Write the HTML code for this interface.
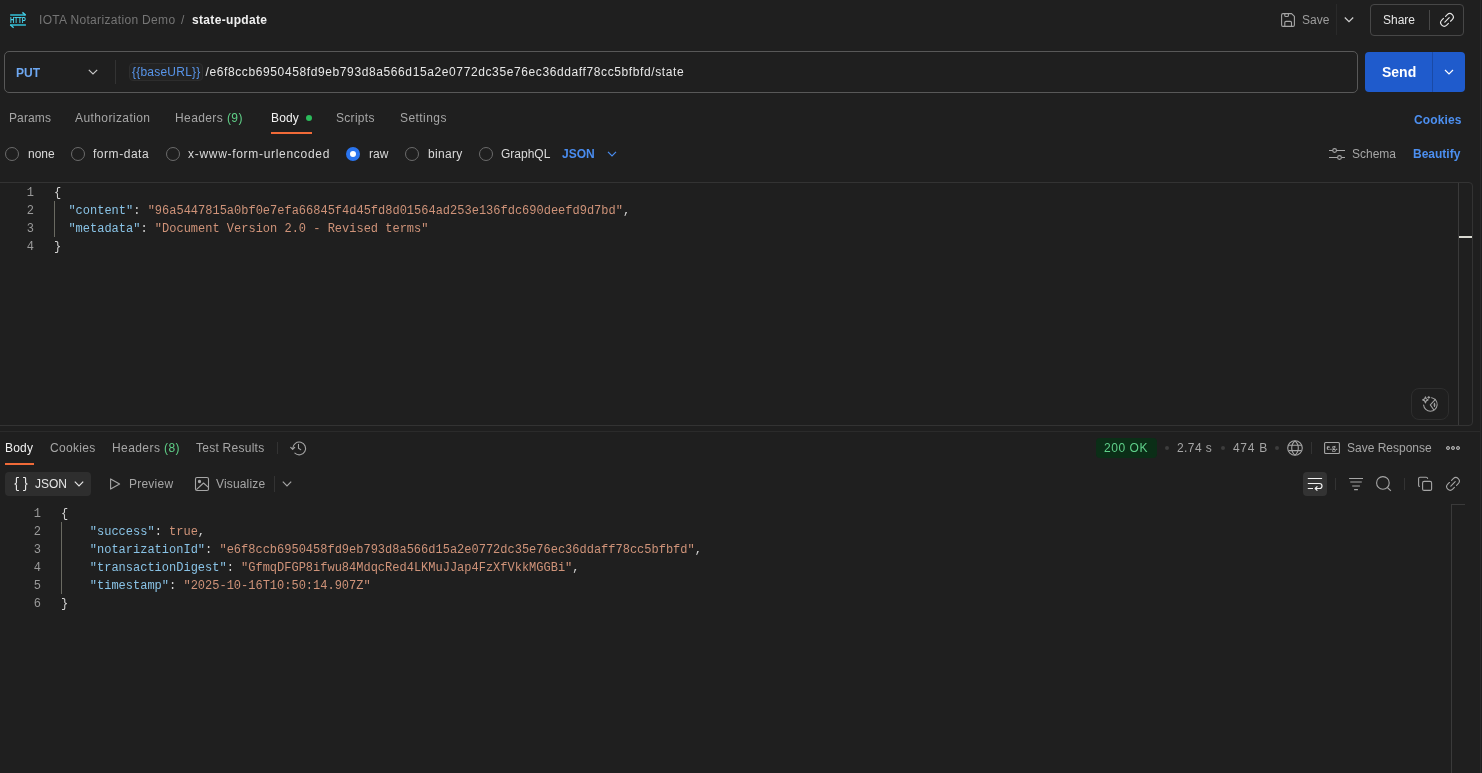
<!DOCTYPE html>
<html><head><meta charset="utf-8">
<style>
*{margin:0;padding:0;box-sizing:border-box}
html,body{width:1482px;height:773px;overflow:hidden;background:#1f1f1f}
body{will-change:transform;position:relative;font-family:"Liberation Sans",sans-serif;font-size:12px;color:#a6a6a6}
.a{position:absolute;white-space:pre;line-height:14px}
svg{position:absolute;overflow:visible}
.mono{font-family:"Liberation Mono",monospace;font-size:12px;line-height:18px}
.ln{position:absolute;text-align:right;color:#9a9a9a}
.k{color:#89c3e6}.s{color:#cf9379}.p{color:#d4d4d4}
</style></head><body>
<!-- edge strip -->
<div style="position:absolute;left:1480px;top:0;width:1px;height:773px;background:#2a2a2a"></div>

<!-- ===== top bar ===== -->
<svg style="left:0;top:0" width="40" height="40" viewBox="0 0 40 40">
<path d="M10.2 15 H25.6" stroke="#2f9fb2" stroke-width="1.9"/>
<path d="M22.4 12.4 L25.6 15.1" stroke="#45cde4" stroke-width="1.4"/>
<path d="M10.2 25 H25.9" stroke="#2f9fb2" stroke-width="1.9"/>
<path d="M13.6 27.7 L10.3 24.8" stroke="#45cde4" stroke-width="1.4"/>
<text x="9.9" y="23" font-family="Liberation Sans" font-weight="bold" font-size="8.2" fill="#48d2ea" textLength="16" lengthAdjust="spacingAndGlyphs">HTTP</text>
</svg>
<div class="a" id="bc1" style="left:39px;top:13px;color:#757575;letter-spacing:0.33px">IOTA Notarization Demo</div>
<div class="a" id="bc2" style="left:181px;top:13px;color:#757575">/</div>
<div class="a" id="bc3" style="left:192px;top:13px;color:#f0f0f0;font-weight:bold;letter-spacing:0.33px">state-update</div>

<div class="a" id="save" style="left:1302px;top:13px;color:#9c9c9c">Save</div>
<div style="position:absolute;left:1336px;top:4px;width:1px;height:31px;background:#2a2a2a"></div>
<div style="position:absolute;left:1370px;top:4px;width:94px;height:32px;border:1px solid #474747;border-radius:4px"></div>
<div class="a" id="share" style="left:1383px;top:13px;color:#e6e6e6">Share</div>
<div style="position:absolute;left:1429px;top:10px;width:1px;height:20px;background:#474747"></div>

<!-- ===== URL bar ===== -->
<div style="position:absolute;left:4px;top:51px;width:1354px;height:42px;border:1px solid #585858;border-radius:5px"></div>
<div class="a" id="put" style="left:16px;top:66px;color:#6ea8f2;font-weight:bold;font-size:12px">PUT</div>
<div style="position:absolute;left:115px;top:60px;width:1px;height:24px;background:#333"></div>
<div style="position:absolute;left:129px;top:63px;width:74px;height:18px;background:#232323;border:1px solid #2d2d2d;border-radius:4px"></div>
<div class="a" id="base" style="left:132px;top:64.5px;color:#5895ea;font-size:12px;letter-spacing:0.22px">{{baseURL}}</div>
<div class="a" id="url" style="left:205.5px;top:64.5px;color:#e8e8e8;font-size:12px;letter-spacing:0.61px">/e6f8ccb6950458fd9eb793d8a566d15a2e0772dc35e76ec36ddaff78cc5bfbfd/state</div>

<div style="position:absolute;left:1365px;top:52px;width:100px;height:40px;background:#1f5bcc;border-radius:4px"></div>
<div style="position:absolute;left:1432px;top:52px;width:1px;height:40px;background:#1a4aa6"></div>
<div class="a" id="send" style="left:1382px;top:65px;color:#fff;font-weight:bold;font-size:14px">Send</div>

<!-- ===== request tabs ===== -->
<div class="a" id="t1" style="left:9px;top:111px;letter-spacing:0.12px">Params</div>
<div class="a" id="t2" style="left:75px;top:111px;letter-spacing:0.41px">Authorization</div>
<div class="a" id="t3" style="left:175px;top:111px;letter-spacing:0.4px">Headers <span style="color:#5fcf87">(9)</span></div>
<div class="a" id="t4" style="left:271px;top:111px;color:#f2f2f2;letter-spacing:0.13px">Body</div>
<div style="position:absolute;left:306px;top:115px;width:6px;height:6px;border-radius:50%;background:#2bbb5b"></div>
<div style="position:absolute;left:271px;top:132px;width:41px;height:2px;background:#f06a38"></div>
<div class="a" id="t5" style="left:336px;top:111px;letter-spacing:0.3px">Scripts</div>
<div class="a" id="t6" style="left:400px;top:111px;letter-spacing:0.44px">Settings</div>
<div class="a" id="cookies" style="left:1414px;top:113px;color:#4c8ff0;font-weight:bold;letter-spacing:0.13px">Cookies</div>

<!-- ===== radio row ===== -->
<div class="a" id="r1" style="left:28px;top:147px;color:#dadada">none</div>
<div class="a" id="r2" style="left:93px;top:147px;color:#dadada;letter-spacing:0.54px">form-data</div>
<div class="a" id="r3" style="left:188px;top:147px;color:#dadada;letter-spacing:0.7px">x-www-form-urlencoded</div>
<div class="a" id="r4" style="left:369px;top:147px;color:#dadada">raw</div>
<div class="a" id="r5" style="left:428px;top:147px;color:#dadada;letter-spacing:0.32px">binary</div>
<div class="a" id="r6" style="left:501px;top:147px;color:#dadada">GraphQL</div>
<div class="a" id="json1" style="left:562px;top:147px;color:#4a8df0;font-weight:bold">JSON</div>
<div class="a" id="schema" style="left:1352px;top:147px;color:#a6a6a6">Schema</div>
<div class="a" id="beautify" style="left:1413px;top:147px;color:#4c8ff0;font-weight:bold">Beautify</div>

<!-- ===== request editor ===== -->
<div style="position:absolute;left:-6px;top:182px;width:1479px;height:244px;border:1px solid #333;border-radius:4px"></div>
<div style="position:absolute;left:1458px;top:183px;width:1px;height:242px;background:#3a3a3a"></div>
<div style="position:absolute;left:1459px;top:236px;width:13px;height:2px;background:#d8d8d0"></div>
<div class="mono ln" style="left:0;top:184px;width:34px">1<br>2<br>3<br>4</div>
<div style="position:absolute;left:54px;top:201px;width:1px;height:36px;background:#6a6a62"></div>
<div class="mono a" style="left:54px;top:184px;color:#d4d4d4">{<br>  <span class="k">"content"</span>: <span class="s">"96a5447815a0bf0e7efa66845f4d45fd8d01564ad253e136fdc690deefd9d7bd"</span>,<br>  <span class="k">"metadata"</span>: <span class="s">"Document Version 2.0 - Revised terms"</span><br>}</div>
<div style="position:absolute;left:1411px;top:388px;width:38px;height:32px;border:1px solid #2e2e2e;border-radius:8px"></div>

<!-- ===== response ===== -->
<div style="position:absolute;left:0;top:431px;width:1480px;height:1px;background:#2b2b2b"></div>
<div class="a" id="rt1" style="left:5px;top:441px;color:#f2f2f2;letter-spacing:0.2px">Body</div>
<div style="position:absolute;left:5px;top:463px;width:29px;height:2px;background:#f06a38"></div>
<div class="a" id="rt2" style="left:50px;top:441px;letter-spacing:0.3px">Cookies</div>
<div class="a" id="rt3" style="left:112px;top:441px;letter-spacing:0.42px">Headers <span style="color:#5fcf87">(8)</span></div>
<div class="a" id="rt4" style="left:196px;top:441px;letter-spacing:0.255px">Test Results</div>
<div style="position:absolute;left:277px;top:442px;width:1px;height:12px;background:#333"></div>

<div style="position:absolute;left:1096px;top:438px;width:61px;height:20px;background:#0b2e17;border-radius:4px"></div>
<div class="a" id="ok" style="left:1104px;top:441px;color:#5fd08a;letter-spacing:0.54px">200 OK</div>
<div class="a" id="time" style="left:1177px;top:441px;letter-spacing:0.42px">2.74 s</div>
<div class="a" id="size" style="left:1233px;top:441px;letter-spacing:0.7px">474 B</div>
<div class="a" id="saveresp" style="left:1347px;top:441px">Save Response</div>

<div style="position:absolute;left:5px;top:472px;width:86px;height:24px;background:#2e2e2e;border-radius:4px"></div>
<div class="a" id="json2" style="left:35px;top:477px;color:#e6e6e6">JSON</div>
<div class="a" id="preview" style="left:129px;top:477px;letter-spacing:0.23px">Preview</div>
<div class="a" id="visualize" style="left:216px;top:477px;letter-spacing:0.16px">Visualize</div>
<div style="position:absolute;left:274px;top:476px;width:1px;height:16px;background:#333"></div>
<div style="position:absolute;left:1303px;top:472px;width:24px;height:24px;background:#333;border-radius:4px"></div>

<div style="position:absolute;left:1451px;top:504px;width:1px;height:269px;background:#3a3a3a"></div>
<div style="position:absolute;left:1451px;top:504px;width:14px;height:1px;background:#3a3a3a"></div>
<div class="mono ln" style="left:0;top:505px;width:41px">1<br>2<br>3<br>4<br>5<br>6</div>
<div style="position:absolute;left:61px;top:522px;width:1px;height:72px;background:#6a6a62"></div>
<div class="mono a" style="left:61px;top:505px;color:#d4d4d4">{<br>    <span class="k">"success"</span>: <span class="s">true</span>,<br>    <span class="k">"notarizationId"</span>: <span class="s">"e6f8ccb6950458fd9eb793d8a566d15a2e0772dc35e76ec36ddaff78cc5bfbfd"</span>,<br>    <span class="k">"transactionDigest"</span>: <span class="s">"GfmqDFGP8ifwu84MdqcRed4LKMuJJap4FzXfVkkMGGBi"</span>,<br>    <span class="k">"timestamp"</span>: <span class="s">"2025-10-16T10:50:14.907Z"</span><br>}</div>

<!-- ===== icons ===== -->
<svg style="left:1276px;top:8px" width="24" height="24" viewBox="0 0 24 24" fill="none" stroke="#a6a6a6" stroke-width="1.1" stroke-linejoin="round">
<path d="M7 5.6 H15.6 L18.4 8.4 V17 Q18.4 18.4 17 18.4 H7 Q5.6 18.4 5.6 17 V7 Q5.6 5.6 7 5.6 Z"/>
<path d="M8.8 5.6 V7.4 Q8.8 8.5 9.9 8.5 H11.3 Q12.4 8.5 12.4 7.4 V5.6"/>
<path d="M8.8 18.4 V14.6 Q8.8 13.4 10 13.4 H14.3 Q15.5 13.4 15.5 14.6 V18.4"/>
</svg>
<svg style="left:1340px;top:12px" width="16" height="16" viewBox="0 0 16 16" fill="none" stroke="#d0d0d0" stroke-width="1.2"><path d="M4.8 5.5 L9 9.7 L13.2 5.5"/></svg>
<svg style="left:1436px;top:8px" width="24" height="24" viewBox="0 0 24 24" fill="none" stroke="#e6e6e6" stroke-width="1.15" stroke-linecap="round">
<g transform="translate(11 11.85) rotate(45)"><path d="M-3.5 -1.5 V-3.9 A3.5 3.5 0 0 1 3.5 -3.9 V-1.5"/><path d="M-3.5 1.5 V3.9 A3.5 3.5 0 0 0 3.5 3.9 V1.5"/><path d="M0 -3.1 V3.1"/></g>
</svg>
<svg style="left:84px;top:64px" width="16" height="16" viewBox="0 0 16 16" fill="none" stroke="#c8c8c8" stroke-width="1.2"><path d="M4.8 5.8 L9 10 L13.2 5.8"/></svg>
<svg style="left:1441px;top:64px" width="16" height="16" viewBox="0 0 16 16" fill="none" stroke="#ffffff" stroke-width="1.2"><path d="M4 6 L8 10 L12 6"/></svg>

<!-- radios -->
<div style="position:absolute;left:5px;top:147px;width:14px;height:14px;border:1px solid #6b6b6b;border-radius:50%"></div>
<div style="position:absolute;left:71px;top:147px;width:14px;height:14px;border:1px solid #6b6b6b;border-radius:50%"></div>
<div style="position:absolute;left:166px;top:147px;width:14px;height:14px;border:1px solid #6b6b6b;border-radius:50%"></div>
<div style="position:absolute;left:346px;top:147px;width:14px;height:14px;border:4px solid #2a74ee;border-radius:50%;background:#fff"></div>
<div style="position:absolute;left:405px;top:147px;width:14px;height:14px;border:1px solid #6b6b6b;border-radius:50%"></div>
<div style="position:absolute;left:479px;top:147px;width:14px;height:14px;border:1px solid #6b6b6b;border-radius:50%"></div>
<svg style="left:604px;top:146px" width="16" height="16" viewBox="0 0 16 16" fill="none" stroke="#4a8df0" stroke-width="1.2"><path d="M4 5.8 L8 9.8 L12 5.8"/></svg>

<svg style="left:1324px;top:142px" width="26" height="24" viewBox="0 0 26 24" fill="none" stroke="#a6a6a6" stroke-width="1.1">
<path d="M5 8.5 H8.7 M12.5 8.5 H21"/><circle cx="10.6" cy="8.5" r="1.9"/>
<path d="M5 15.5 H13.6 M17.4 15.5 H21"/><circle cx="15.5" cy="15.5" r="1.9"/>
</svg>

<!-- AI icon -->
<svg style="left:1418px;top:392px" width="24" height="24" viewBox="0 0 24 24" fill="none" stroke="#a0a0a0" stroke-width="1.1" stroke-linejoin="round" stroke-linecap="round">
<path d="M5.6 13 A6.8 6.8 0 1 0 13.6 5.7"/>
<path d="M17.4 7.4 L12.3 12.9 L15.9 18"/>
<path d="M16.5 11.2 Q17.2 12.9 16.5 14.6 Q15.8 12.9 16.5 11.2 Z"/>
<path d="M7.45 4.9 Q7.8 7.5 10.1 7.9 Q7.8 8.3 7.45 10.9 Q7.1 8.3 4.6 7.9 Q7.1 7.5 7.45 4.9 Z"/>
<path d="M10.8 4.5 V6.3 M9.9 5.4 H11.7"/>
</svg>

<!-- response header icons -->
<svg style="left:284px;top:436px" width="28" height="24" viewBox="0 0 28 24" fill="none" stroke="#a6a6a6" stroke-width="1.1" stroke-linecap="round" stroke-linejoin="round">
<path d="M8.8 12.3 A6.4 6.4 0 1 1 10.9 17.2"/>
<path d="M6.7 11.4 L8.7 13.4 L10.7 11.4"/>
<path d="M14.5 8.3 V12.2 L16.7 13.6"/>
</svg>
<div style="position:absolute;left:1165px;top:446px;width:4px;height:4px;border-radius:50%;background:#3d3d3d"></div>
<div style="position:absolute;left:1221px;top:446px;width:4px;height:4px;border-radius:50%;background:#3d3d3d"></div>
<div style="position:absolute;left:1275px;top:446px;width:4px;height:4px;border-radius:50%;background:#3d3d3d"></div>
<svg style="left:1283px;top:436px" width="24" height="24" viewBox="0 0 24 24" fill="none" stroke="#a6a6a6" stroke-width="1.1">
<circle cx="12" cy="12" r="7.3"/>
<path d="M12 4.8 C9.6 6.8 8.7 9 8.7 12 C8.7 15 9.6 17.2 12 19.2"/>
<path d="M12 4.8 C14.4 6.8 15.3 9 15.3 12 C15.3 15 14.4 17.2 12 19.2"/>
<path d="M5.6 9.3 H18.4 M5.6 14.6 H18.4"/>
</svg>
<div style="position:absolute;left:1311px;top:442px;width:1px;height:12px;background:#333"></div>
<svg style="left:1320px;top:436px" width="24" height="24" viewBox="0 0 24 24" fill="none" stroke="#a6a6a6" stroke-width="1.1">
<rect x="4.6" y="6.5" width="14.8" height="11" rx="1"/>
<text x="6.6" y="14.4" font-family="Liberation Serif" font-weight="bold" font-size="8.5" fill="#b0b0b0" stroke="none" textLength="11" lengthAdjust="spacingAndGlyphs">e.g.</text>
</svg>
<svg style="left:1440px;top:436px" width="24" height="24" viewBox="0 0 24 24" fill="#6a6a6a" stroke="#a6a6a6" stroke-width="1">
<circle cx="8" cy="12" r="1.6"/><circle cx="13" cy="12" r="1.6"/><circle cx="18" cy="12" r="1.6"/>
</svg>

<!-- response toolbar icons -->
<svg style="left:8px;top:472px" width="24" height="24" viewBox="0 0 24 24" fill="none" stroke="#f0f0f0" stroke-width="1.1" stroke-linejoin="round">
<path d="M10.9 5.5 H9.3 Q8.4 5.5 8.4 6.4 V10.6 Q8.4 11.6 6.9 12 Q8.4 12.4 8.4 13.4 V17.6 Q8.4 18.5 9.3 18.5 H10.9"/>
<path d="M15.1 5.5 H16.7 Q17.6 5.5 17.6 6.4 V10.6 Q17.6 11.6 19.1 12 Q17.6 12.4 17.6 13.4 V17.6 Q17.6 18.5 16.7 18.5 H15.1"/>
</svg>
<svg style="left:70px;top:476px" width="16" height="16" viewBox="0 0 16 16" fill="none" stroke="#e6e6e6" stroke-width="1.2"><path d="M4.8 5.6 L9 9.8 L13.2 5.6"/></svg>
<svg style="left:103px;top:472px" width="24" height="24" viewBox="0 0 24 24" fill="none" stroke="#a6a6a6" stroke-width="1.1" stroke-linejoin="round"><path d="M7.6 6.9 V17.1 L16.6 12 Z"/></svg>
<svg style="left:190px;top:472px" width="24" height="24" viewBox="0 0 24 24" fill="none" stroke="#a6a6a6" stroke-width="1.1" stroke-linejoin="round">
<rect x="5.5" y="5.5" width="13" height="13" rx="1.5"/><circle cx="9.5" cy="9.5" r="1.1" fill="#a6a6a6"/><path d="M6.4 17.6 L13.5 11 L18.4 15.4"/>
</svg>
<svg style="left:279px;top:476px" width="16" height="16" viewBox="0 0 16 16" fill="none" stroke="#a6a6a6" stroke-width="1.2"><path d="M3.8 5.6 L8 9.8 L12.2 5.6"/></svg>

<svg style="left:1300px;top:470px" width="40" height="28" viewBox="0 0 40 28" fill="none" stroke="#f2f2f2" stroke-width="1.2" stroke-linecap="butt" stroke-linejoin="round">
<path d="M7.8 8.5 H22.1 M7.8 13.5 H19.5 A2.5 2.5 0 0 1 19.5 18.5 H15.4 M7.8 18.5 H13"/>
<path d="M17.4 16.3 L15.2 18.5 L17.4 20.7"/>
</svg>
<div style="position:absolute;left:1335px;top:478px;width:1px;height:12px;background:#333"></div>
<svg style="left:1344px;top:470px" width="52" height="28" viewBox="0 0 52 28" fill="none" stroke="#a6a6a6" stroke-width="1.1">
<path d="M5.1 8.5 H19 M6.3 12 H17.8 M8.2 16 H15.9 M10.1 19.6 H13.9"/>
<circle cx="38.9" cy="12.9" r="6.3"/><path d="M43.4 17.5 L46.9 20.9"/>
</svg>
<div style="position:absolute;left:1404px;top:478px;width:1px;height:12px;background:#333"></div>
<svg style="left:1412px;top:470px" width="52" height="28" viewBox="0 0 52 28" fill="none" stroke="#a6a6a6" stroke-width="1.1" stroke-linecap="round" stroke-linejoin="round">
<path d="M7.4 16.4 Q6.6 16.2 6.6 15.2 V8.6 Q6.6 7.3 8 7.3 H14.2 Q15.4 7.3 15.6 8.4"/>
<rect x="10.6" y="11.4" width="9" height="9" rx="1.5"/>
<g transform="translate(41 13.9) rotate(45)"><path d="M-3.5 -1.5 V-3.9 A3.5 3.5 0 0 1 3.5 -3.9 V-1.5"/><path d="M-3.5 1.5 V3.9 A3.5 3.5 0 0 0 3.5 3.9 V1.5"/><path d="M0 -3.1 V3.1"/></g>
</svg>
</body></html>
